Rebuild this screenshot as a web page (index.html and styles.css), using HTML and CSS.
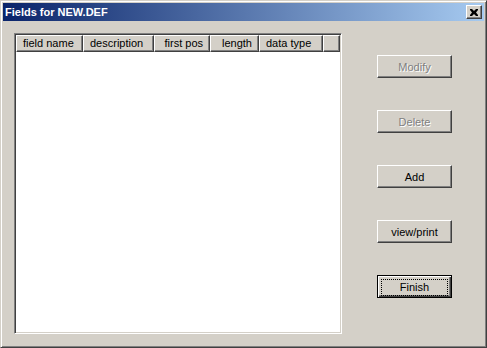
FILE: index.html
```html
<!DOCTYPE html>
<html lang="en">
<head>
  <meta charset="UTF-8">
  <title>Fields for NEW.DEF</title>
  <link rel="stylesheet" href="styles.css">
</head>
<body>
  <div class="window">
    <div class="title-bar">
      <span class="title">Fields for NEW.DEF</span>
      <button class="close-btn" aria-label="Close">
        <svg width="8" height="7" viewBox="0 0 8 7">
          <path d="M0 0h2l2 2 2-2h2v1L6 3.5 8 6v1H6L4 5 2 7H0V6l2-2.5L0 1z" fill="#000"/>
        </svg>
      </button>
    </div>

    <div class="content">
      <div class="list-view">
        <div class="list-header">
          <div class="col col-name">field name</div>
          <div class="col col-desc">description</div>
          <div class="col col-pos right">first pos</div>
          <div class="col col-len right">length</div>
          <div class="col col-type">data type</div>
          <div class="col col-rest"></div>
        </div>
        <div class="list-body">
          <!-- no rows yet -->
        </div>
      </div>

      <div class="actions">
        <button class="btn" disabled>Modify</button>
        <button class="btn" disabled>Delete</button>
        <button class="btn">Add</button>
        <button class="btn">view/print</button>
        <button class="btn default"><span class="focus">Finish</span></button>
      </div>
    </div>
  </div>
</body>
</html>
```

FILE: styles.css
```css
body {
  margin: 0;
  font-family: Tahoma, "Liberation Sans", Arial, sans-serif;
  font-size: 11px;
  color: #000;
  background-color: #d4d0c8;
}

.window {
  width: 487px;
  height: 348px;
  box-sizing: border-box;
  padding: 2px;
  background-color: #d4d0c8;
  border: 1px solid;
  border-color: #d4d0c8 #404040 #404040 #d4d0c8;
  box-shadow: inset 1px 1px #fff, inset -1px -1px #808080;
}

.title-bar {
  height: 18px;
  display: flex;
  align-items: center;
  justify-content: space-between;
  padding: 0 2px;
  background: linear-gradient(to right, #0a246a, #a6caf0);
}

.title {
  color: #fff;
  font-weight: bold;
  font-size: 11px;
  letter-spacing: 0;
}

.close-btn {
  width: 16px;
  height: 14px;
  padding: 0;
  display: flex;
  align-items: center;
  justify-content: center;
  background-color: #d4d0c8;
  border: 1px solid;
  border-color: #fff #404040 #404040 #fff;
  box-shadow: inset -1px -1px #808080;
}

.content {
  display: flex;
  padding: 12px 0 0 11px;
  gap: 35px;
}

.list-view {
  width: 328px;
  height: 301px;
  box-sizing: border-box;
  display: flex;
  flex-direction: column;
  background-color: #fff;
  border: 1px solid;
  border-color: #808080 #fff #fff #808080;
  box-shadow: inset 1px 1px #404040, inset -1px -1px #d4d0c8;
  padding: 1px;
}

.list-header {
  display: flex;
  height: 17px;
}

.col {
  box-sizing: border-box;
  height: 17px;
  line-height: 15px;
  padding: 0 6px;
  background-color: #d4d0c8;
  border-top: 1px solid #fff;
  border-left: 1px solid #fff;
  border-right: 1px solid #404040;
  border-bottom: 1px solid #404040;
  box-shadow: inset -1px -1px #808080;
  white-space: nowrap;
  overflow: hidden;
}

.col.right {
  text-align: right;
}

.col-name { width: 67px; }
.col-desc { width: 71px; }
.col-pos  { width: 56px; }
.col-len  { width: 49px; }
.col-type { width: 64px; }
.col-rest { flex: 1; }

.list-body {
  flex: 1;
}

.actions {
  display: flex;
  flex-direction: column;
  gap: 32px;
  padding-top: 22px;
}

.btn {
  width: 75px;
  height: 23px;
  padding: 0;
  font-family: Tahoma, "Liberation Sans", Arial, sans-serif;
  font-size: 11px;
  color: #000;
  background-color: #d4d0c8;
  border: 1px solid;
  border-color: #fff #404040 #404040 #fff;
  box-shadow: inset -1px -1px #808080;
}

.btn:disabled {
  color: #808080;
  text-shadow: 1px 1px #fff;
}

.btn.default {
  border-color: #000;
  box-shadow: inset 1px 1px #fff, inset -1px -1px #404040, inset -2px -2px #808080;
  padding: 3px;
}

.btn.default .focus {
  display: block;
  height: 15px;
  line-height: 15px;
  border: 1px dotted #000;
}
```
